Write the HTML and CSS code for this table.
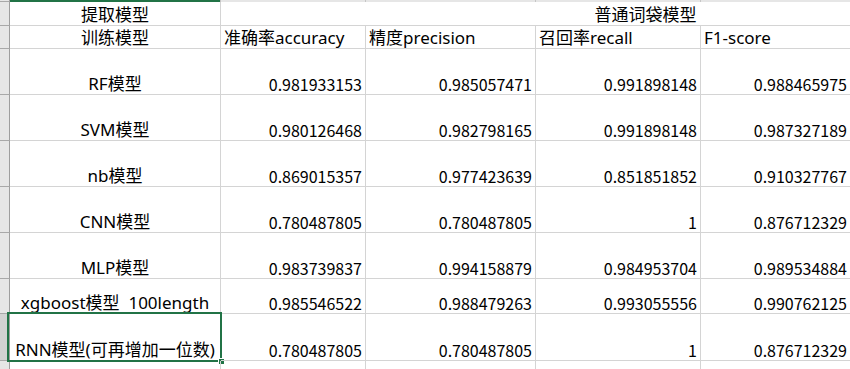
FILE: index.html
```html
<!DOCTYPE html>
<html lang="zh">
<head>
<meta charset="utf-8">
<title>模型结果</title>
<link rel="stylesheet" href="styles.css">
</head>
<body>
<div class="sheet">
  <div class="colhead rh"></div>
  <div class="colhead sel"></div>
  <div class="colhead"></div>
  <div class="colhead"></div>
  <div class="colhead"></div>
  <div class="colhead"></div>
  <div class="colhead"></div>

  <div class="rh r1"></div>
  <div class="c ctr r1">提取模型</div>
  <div class="c ctr merged r1">普通词袋模型</div>

  <div class="rh r2"></div>
  <div class="c ctr r2">训练模型</div>
  <div class="c lft r2">准确率accuracy</div>
  <div class="c lft r2">精度precision</div>
  <div class="c lft r2">召回率recall</div>
  <div class="c lft r2">F1-score</div>
  <div class="c r2"></div>

  <div class="rh rd"></div>
  <div class="c ctr rd">RF模型</div>
  <div class="c num rd">0.981933153</div>
  <div class="c num rd">0.985057471</div>
  <div class="c num rd">0.991898148</div>
  <div class="c num rd">0.988465975</div>
  <div class="c rd"></div>

  <div class="rh rd"></div>
  <div class="c ctr rd">SVM模型</div>
  <div class="c num rd">0.980126468</div>
  <div class="c num rd">0.982798165</div>
  <div class="c num rd">0.991898148</div>
  <div class="c num rd">0.987327189</div>
  <div class="c rd"></div>

  <div class="rh rd"></div>
  <div class="c ctr rd">nb模型</div>
  <div class="c num rd">0.869015357</div>
  <div class="c num rd">0.977423639</div>
  <div class="c num rd">0.851851852</div>
  <div class="c num rd">0.910327767</div>
  <div class="c rd"></div>

  <div class="rh rd"></div>
  <div class="c ctr rd">CNN模型</div>
  <div class="c num rd">0.780487805</div>
  <div class="c num rd">0.780487805</div>
  <div class="c num rd">1</div>
  <div class="c num rd">0.876712329</div>
  <div class="c rd"></div>

  <div class="rh rd"></div>
  <div class="c ctr rd">MLP模型</div>
  <div class="c num rd">0.983739837</div>
  <div class="c num rd">0.994158879</div>
  <div class="c num rd">0.984953704</div>
  <div class="c num rd">0.989534884</div>
  <div class="c rd"></div>

  <div class="rh rx"></div>
  <div class="c ctr rx">xgboost模型  100length</div>
  <div class="c num rx">0.985546522</div>
  <div class="c num rx">0.988479263</div>
  <div class="c num rx">0.993055556</div>
  <div class="c num rx">0.990762125</div>
  <div class="c rx"></div>

  <div class="rh rsel rr"></div>
  <div class="c ctr rr active">RNN模型(可再增加一位数)<span class="selbox"><span class="handle"></span></span></div>
  <div class="c num rr">0.780487805</div>
  <div class="c num rr">0.780487805</div>
  <div class="c num rr">1</div>
  <div class="c num rr">0.876712329</div>
  <div class="c rr"></div>

  <div class="rh rl"></div>
  <div class="c rl"></div>
  <div class="c rl"></div>
  <div class="c rl"></div>
  <div class="c rl"></div>
  <div class="c rl"></div>
  <div class="c rl"></div>
</div>
</body>
</html>
```

FILE: styles.css
```css
html, body {
  margin: 0;
  padding: 0;
  background: #ffffff;
  overflow: hidden;
}

body {
  width: 850px;
  height: 369px;
  font-family: "Noto Sans", "Noto Sans CJK SC", sans-serif;
  font-size: 17px;
  color: #000000;
}

.sheet {
  display: grid;
  grid-template-columns: 10px 211px 145px 170px 165px 150px 220px;
  grid-template-rows: 2px 24px 23px 46px 46px 46px 46px 46px 35px 47px 20px;
  width: 1140px;
}

.colhead {
  background: #e6e6e6;
  border-right: 1px solid #c6c6c6;
  box-sizing: border-box;
}

.colhead.sel {
  background: #217346;
}

.colhead.rh {
  border-right: 1px solid #9e9e9e;
}

.rh {
  background: #e6e6e6;
  border-right: 1px solid #9e9e9e;
  border-bottom: 1px solid #a8a8a8;
  box-sizing: border-box;
}

.rh.rsel {
  background: #d2d2d2;
}

.c {
  box-sizing: border-box;
  border-right: 1px solid #d4d4d4;
  border-bottom: 1px solid #d4d4d4;
  display: flex;
  align-items: flex-end;
  white-space: pre;
  line-height: 20px;
  padding: 0 3px 0 3px;
  position: relative;
}

.ctr {
  justify-content: center;
}

.lft {
  justify-content: flex-start;
}

.num {
  justify-content: flex-end;
  font-family: "Noto Sans CJK SC", sans-serif;
  font-size: 16px;
}

.merged {
  grid-column: 3 / 8;
}

.selbox {
  position: absolute;
  left: -3px;
  top: -2px;
  right: -2px;
  bottom: -2px;
  border: 2px solid #217346;
  pointer-events: none;
}

.handle {
  position: absolute;
  right: -5px;
  bottom: -5px;
  width: 5px;
  height: 5px;
  background: #217346;
  border: 1px solid #ffffff;
}
```
